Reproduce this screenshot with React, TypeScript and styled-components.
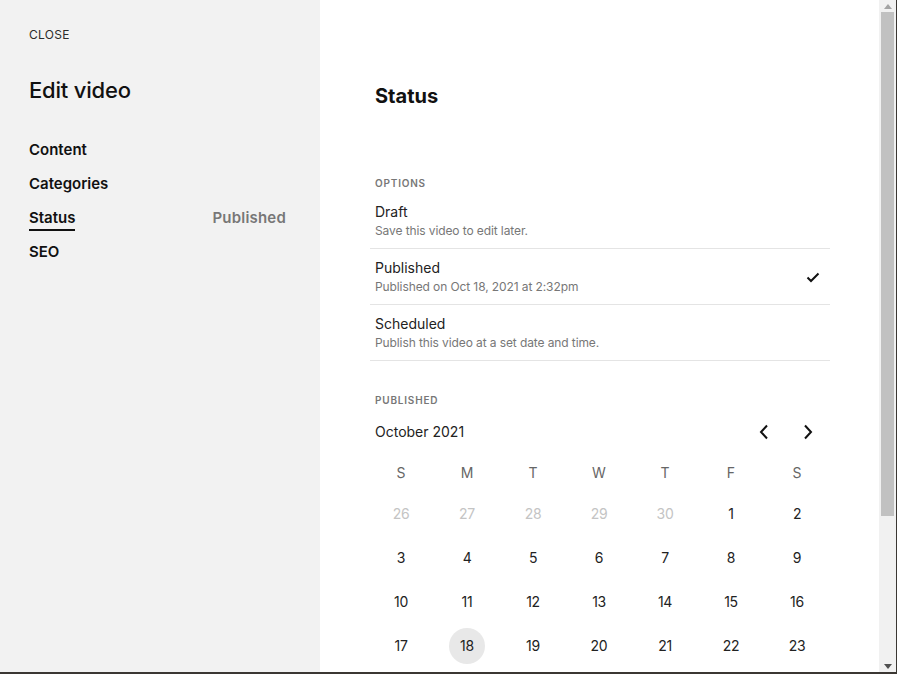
import styled, { createGlobalStyle } from "styled-components";

const GlobalStyle = createGlobalStyle`
  html, body {
    margin: 0;
    padding: 0;
    background: #3b3733;
  }
  body {
    font-family: Inter, "Noto Sans", "Liberation Sans", sans-serif;
    color: #111;
  }
`;

const Frame = styled.div`
  display: flex;
  width: 896px;
  height: 672px;
  overflow: hidden;
  background: #fff;
`;

const Sidebar = styled.aside`
  width: 320px;
  flex-shrink: 0;
  background: #f2f2f2;
  padding: 27px 34px 0 29px;
  box-sizing: border-box;
`;

const CloseLink = styled.div`
  font-size: 12px;
  line-height: 16px;
  letter-spacing: 0.3px;
  color: #2b2b2b;
`;

const SideTitle = styled.h1`
  margin: 33px 0 29px;
  font-size: 22px;
  line-height: 28px;
  font-weight: 500;
  letter-spacing: -0.2px;
  color: #111;
`;

const NavItem = styled.div`
  display: flex;
  align-items: center;
  justify-content: space-between;
  height: 34px;
`;

const NavLabel = styled.span<{ $active?: boolean }>`
  display: inline-block;
  font-size: 15px;
  line-height: 20px;
  font-weight: 600;
  color: #111;
  margin-top: ${({ $active }) => ($active ? "3px" : "0")};
  padding-bottom: ${({ $active }) => ($active ? "1px" : "0")};
  border-bottom: ${({ $active }) => ($active ? "2px solid #111" : "none")};
`;

const NavValue = styled.span`
  font-size: 15px;
  line-height: 20px;
  font-weight: 600;
  letter-spacing: 0.2px;
  color: #777;
  margin-bottom: 1px;
`;

const Main = styled.main`
  flex: 1;
  padding: 84px 0 0 50px;
  box-sizing: border-box;
`;

const Content = styled.div`
  width: 460px;
`;

const Heading = styled.h2`
  margin: 0 0 0 5px;
  font-size: 20px;
  line-height: 24px;
  font-weight: 700;
  color: #111;
`;

const SectionLabel = styled.div<{ $top: number }>`
  margin: ${({ $top }) => $top}px 0 4px 5px;
  font-size: 10px;
  line-height: 12px;
  font-weight: 600;
  letter-spacing: 0.8px;
  color: #777;
  text-transform: uppercase;
`;

const OptionRow = styled.div`
  display: flex;
  align-items: center;
  justify-content: space-between;
  padding: 10px 10px 9px 5px;
  border-bottom: 1px solid #e4e4e4;
`;

const OptionTitle = styled.div`
  font-size: 14px;
  line-height: 18px;
  color: #222;
`;

const OptionSub = styled.div`
  margin-top: 2px;
  font-size: 12px;
  line-height: 16px;
  color: #777;
  letter-spacing: -0.1px;
`;

const MonthRow = styled.div`
  display: flex;
  align-items: center;
  justify-content: space-between;
  height: 20px;
  margin: 16px 0 10px 5px;
`;

const MonthName = styled.span`
  font-size: 14px;
  line-height: 20px;
  color: #222;
`;

const Arrows = styled.div`
  display: flex;
  gap: 28px;
  padding-right: 14px;
`;

const ArrowButton = styled.button`
  border: none;
  background: none;
  padding: 0;
  width: 16px;
  height: 20px;
  display: flex;
  align-items: center;
  justify-content: center;
  cursor: pointer;
`;

const Grid = styled.div`
  display: grid;
  grid-template-columns: repeat(7, 66px);
  margin-left: -2px;
`;

const DayHead = styled.div`
  height: 40px;
  display: flex;
  align-items: center;
  justify-content: center;
  font-size: 14px;
  color: #666;
`;

const DayCell = styled.div`
  height: 44px;
  display: flex;
  align-items: center;
  justify-content: center;
`;

const DayNumber = styled.span<{ $muted?: boolean; $selected?: boolean }>`
  width: 36px;
  height: 36px;
  border-radius: 50%;
  display: flex;
  align-items: center;
  justify-content: center;
  font-size: 14px;
  line-height: 14px;
  letter-spacing: -0.3px;
  padding-bottom: 1px;
  box-sizing: border-box;
  color: ${({ $muted }) => ($muted ? "#c4c4c4" : "#222")};
  background: ${({ $selected }) => ($selected ? "#e8e8e8" : "transparent")};
`;

const Scrollbar = styled.div`
  width: 17px;
  flex-shrink: 0;
  background: #f1f1f1;
  display: flex;
  flex-direction: column;
  align-items: center;
`;

const ScrollArrow = styled.div<{ $dark?: boolean }>`
  height: 12px;
  display: flex;
  align-items: center;
  justify-content: center;
  color: ${({ $dark }) => ($dark ? "#505050" : "#a3a3a3")};
`;

const Thumb = styled.div`
  width: 13px;
  height: 504px;
  background: #c1c1c1;
`;

const ScrollSpace = styled.div`
  flex: 1;
`;

const options = [
  { title: "Draft", sub: "Save this video to edit later.", checked: false },
  { title: "Published", sub: "Published on Oct 18, 2021 at 2:32pm", checked: true },
  { title: "Scheduled", sub: "Publish this video at a set date and time.", checked: false },
];

const weekDays = ["S", "M", "T", "W", "T", "F", "S"];

const days: { n: number; muted?: boolean }[] = [
  { n: 26, muted: true },
  { n: 27, muted: true },
  { n: 28, muted: true },
  { n: 29, muted: true },
  { n: 30, muted: true },
  ...Array.from({ length: 23 }, (_, i) => ({ n: i + 1 })),
];

export default function App() {
  return (
    <>
      <GlobalStyle />
      <Frame>
        <Sidebar>
          <CloseLink>CLOSE</CloseLink>
          <SideTitle>Edit video</SideTitle>
          <NavItem>
            <NavLabel>Content</NavLabel>
          </NavItem>
          <NavItem>
            <NavLabel>Categories</NavLabel>
          </NavItem>
          <NavItem>
            <NavLabel $active>Status</NavLabel>
            <NavValue>Published</NavValue>
          </NavItem>
          <NavItem>
            <NavLabel>SEO</NavLabel>
          </NavItem>
        </Sidebar>

        <Main>
          <Content>
            <Heading>Status</Heading>
            <SectionLabel $top={69}>Options</SectionLabel>
            {options.map((o) => (
              <OptionRow key={o.title}>
                <div>
                  <OptionTitle>{o.title}</OptionTitle>
                  <OptionSub>{o.sub}</OptionSub>
                </div>
                {o.checked && (
                  <svg width="14" height="11" viewBox="0 0 14 11" fill="none">
                    <path d="M1.5 5.5 L5 9 L12.5 1.5" stroke="#111" strokeWidth="2" />
                  </svg>
                )}
              </OptionRow>
            ))}

            <SectionLabel $top={33}>Published</SectionLabel>
            <MonthRow>
              <MonthName>October 2021</MonthName>
              <Arrows>
                <ArrowButton aria-label="Previous month">
                  <svg width="10" height="16" viewBox="0 0 10 16" fill="none">
                    <path d="M8 1.5 L2 8 L8 14.5" stroke="#111" strokeWidth="2" />
                  </svg>
                </ArrowButton>
                <ArrowButton aria-label="Next month">
                  <svg width="10" height="16" viewBox="0 0 10 16" fill="none">
                    <path d="M2 1.5 L8 8 L2 14.5" stroke="#111" strokeWidth="2" />
                  </svg>
                </ArrowButton>
              </Arrows>
            </MonthRow>
            <Grid>
              {weekDays.map((d, i) => (
                <DayHead key={i}>{d}</DayHead>
              ))}
              {days.map((d) => (
                <DayCell key={`${d.n}-${d.muted ? "p" : "c"}`}>
                  <DayNumber $muted={d.muted} $selected={!d.muted && d.n === 18}>
                    {d.n}
                  </DayNumber>
                </DayCell>
              ))}
            </Grid>
          </Content>
        </Main>

        <Scrollbar>
          <ScrollArrow>
            <svg width="8" height="5" viewBox="0 0 8 5">
              <path d="M0 5 L4 0 L8 5 Z" fill="currentColor" />
            </svg>
          </ScrollArrow>
          <Thumb />
          <ScrollSpace />
          <ScrollArrow $dark>
            <svg width="8" height="5" viewBox="0 0 8 5">
              <path d="M0 0 L8 0 L4 5 Z" fill="currentColor" />
            </svg>
          </ScrollArrow>
        </Scrollbar>
      </Frame>
    </>
  );
}
